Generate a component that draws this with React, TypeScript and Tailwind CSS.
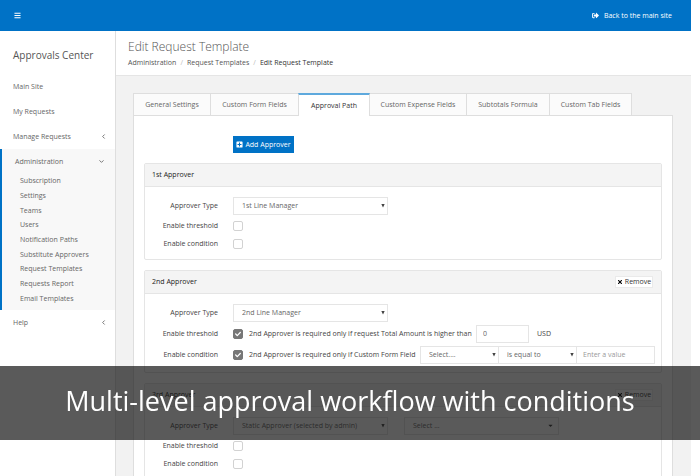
import type { ReactNode } from "react";
import { ChevronDown, ChevronLeft } from "lucide-react";
import { FaBars, FaCaretDown, FaCheck, FaPlusSquare, FaSignOutAlt, FaTimes } from "react-icons/fa";

const adminLinks = [
  "Subscription",
  "Settings",
  "Teams",
  "Users",
  "Notification Paths",
  "Substitute Approvers",
  "Request Templates",
  "Requests Report",
  "Email Templates"
];

const tabs = [
  { label: "General Settings", width: "w-[76px]" },
  { label: "Custom Form Fields", width: "w-[87px]" },
  { label: "Approval Path", width: "w-[70px]", active: true },
  { label: "Custom Expense Fields", width: "w-[96px]" },
  { label: "Subtotals Formula", width: "w-[82px]" },
  { label: "Custom Tab Fields", width: "w-[81px]" }
];

function SideLink({ label, arrow }: { label: string; arrow?: boolean }) {
  return (
    <a href="#" className="flex h-[25px] items-center justify-between pl-[13px] pr-2">
      {label}
      {arrow ? <ChevronLeft className="size-[7px]" strokeWidth={3} /> : null}
    </a>
  );
}

function Sidebar() {
  return (
    <aside className="w-[116px] shrink-0 border-r border-[#dedede] bg-white text-[7px] text-[#666]">
      <h2 className="pb-[11px] pl-[13px] pt-4 text-[10px] leading-4 text-[#555]">Approvals Center</h2>
      <nav>
        <SideLink label="Main Site" />
        <SideLink label="My Requests" />
        <SideLink label="Manage Requests" arrow />
        <div className="border-l-2 border-[#0072c6] bg-[#f8f8f8]">
          <a href="#" className="flex h-[25px] items-center justify-between pl-[13px] pr-[10px]">
            Administration
            <ChevronDown className="size-[7px]" strokeWidth={3} />
          </a>
          <ul className="flex h-[136px] flex-col pb-1 pl-[18px]">
            {adminLinks.map((link) => (
              <li key={link} className="flex flex-1 items-center">
                <a href="#" className="leading-[10px]">{link}</a>
              </li>
            ))}
          </ul>
        </div>
        <SideLink label="Help" arrow />
      </nav>
    </aside>
  );
}

function Select({ id, label, value, className, caret }: { id: string; label?: string; value: string; className: string; caret?: boolean }) {
  return (
    <div className={`relative h-[18px] ${className}`}>
      <select id={id} aria-label={label} className="block h-full w-full appearance-none border border-[#e5e5e5] bg-white pl-2 text-[7px] font-normal text-[#666]">
        <option>{value}</option>
      </select>
      {caret ? (
        <FaCaretDown className="pointer-events-none absolute right-[5px] top-[5px] size-[7px] text-[#333]" />
      ) : (
        <svg viewBox="0 0 4 4" className="pointer-events-none absolute right-[3px] top-[7px] size-1 fill-[#444]">
          <path d="M0.3 0h3.4L2 3.6z" />
        </svg>
      )}
    </div>
  );
}

function Checkbox({ id, checked }: { id: string; checked?: boolean }) {
  return (
    <span className="relative flex size-[10px] shrink-0">
      <input
        id={id}
        type="checkbox"
        defaultChecked={checked}
        className="size-[10px] appearance-none rounded-[2px] border border-[#d2d2d2] bg-white checked:border-[#777] checked:bg-[#777]"
      />
      {checked ? <FaCheck className="pointer-events-none absolute left-[2px] top-[2px] size-[6px] text-white" /> : null}
    </span>
  );
}

function Row({ id, label, height, children }: { id: string; label: string; height: string; children: ReactNode }) {
  return (
    <div className={`flex items-center gap-[15px] ${height}`}>
      <label htmlFor={id} className="w-[73px] shrink-0 whitespace-nowrap text-right">{label}</label>
      <div className="flex min-w-0 flex-1 items-center">{children}</div>
    </div>
  );
}

function Panel({ title, removable, children }: { title: string; removable?: boolean; children: ReactNode }) {
  return (
    <section className="rounded-[2px] border border-[#e5e5e5]">
      <div className="flex h-[23px] items-center justify-between border-b border-[#e5e5e5] bg-[#f4f4f4] pl-[7px] pr-2">
        <h3 className="font-medium text-[#222]">{title}</h3>
        {removable ? (
          <button type="button" className="flex h-3 w-[38px] items-center justify-center gap-[2px] border border-[#eaeaea] bg-white text-[#333]">
            <FaTimes className="size-[6px] text-black" />
            Remove
          </button>
        ) : null}
      </div>
      <div className="flex flex-col gap-[3px] pb-2 pr-[6px] pt-[10px] font-medium text-[#444]">{children}</div>
    </section>
  );
}

export default function App() {
  return (
    <div className="min-h-screen bg-white font-['Open_Sans',sans-serif] text-[7px] leading-[10px]">
      <div className="mr-[9px] flex min-h-screen flex-col">
        <header className="flex h-[31px] shrink-0 items-center justify-between bg-[#0072c6] pl-[14px] pr-[19px] text-white">
          <button type="button" aria-label="Toggle menu">
            <FaBars className="size-[7px]" />
          </button>
          <a href="#" className="flex items-center gap-[5px] font-medium">
            <FaSignOutAlt className="size-[7px]" />
            Back to the main site
          </a>
        </header>

        <div className="flex flex-1">
          <Sidebar />
          <main className="min-w-0 flex-1 bg-[#f2f2f2]">
            <div className="h-[45px] border-b border-[#e5e5e5] bg-white pl-3 pt-2">
              <h1 className="text-[12px] font-light leading-4 text-[#555]">Edit Request Template</h1>
              <nav aria-label="Breadcrumb" className="flex gap-1 pt-[3px] text-[#555]">
                <a href="#">Administration</a>
                <span className="text-[#bbb]">/</span>
                <a href="#">Request Templates</a>
                <span className="text-[#bbb]">/</span>
                <span className="font-medium text-[#333]">Edit Request Template</span>
              </nav>
            </div>

            <div className="pl-[17px] pr-[18px] pt-[17px]">
              <div role="tablist" className="relative z-10 -mb-px flex h-[23px]">
                {tabs.map((tab) => (
                  <button
                    key={tab.label}
                    type="button"
                    role="tab"
                    aria-selected={Boolean(tab.active)}
                    className={`-mr-px box-content whitespace-nowrap border-x ${tab.width} ${
                      tab.active
                        ? "relative border-t-2 border-x-[#dedede] border-t-[#5ea9dd] bg-white font-medium text-[#333]"
                        : "border-y border-[#dedede] bg-[#fbfbfb] text-[#666]"
                    }`}
                  >
                    {tab.label}
                  </button>
                ))}
              </div>

              <div className="border border-[#dedede] bg-white px-[10px] pb-3 pt-5">
                <button type="button" className="ml-[89px] flex h-[17px] w-[61px] items-center justify-center gap-[2px] bg-[#0072c6] font-medium text-white">
                  <FaPlusSquare className="size-[7px]" />
                  Add Approver
                </button>

                <div className="flex flex-col gap-[10px] pt-[10px]">
                  <Panel title="1st Approver">
                    <Row id="type-1" label="Approver Type" height="h-[18px]">
                      <Select id="type-1" value="1st Line Manager" className="w-[155px]" />
                    </Row>
                    <Row id="threshold-1" label="Enable threshold" height="h-[15px]">
                      <Checkbox id="threshold-1" />
                    </Row>
                    <Row id="condition-1" label="Enable condition" height="h-[15px]">
                      <Checkbox id="condition-1" />
                    </Row>
                  </Panel>

                  <Panel title="2nd Approver" removable>
                    <Row id="type-2" label="Approver Type" height="h-[18px]">
                      <Select id="type-2" value="2nd Line Manager" className="w-[155px]" />
                    </Row>
                    <Row id="threshold-2" label="Enable threshold" height="h-[18px]">
                      <Checkbox id="threshold-2" checked />
                      <label htmlFor="amount" className="w-[233px] whitespace-nowrap pl-[6px]">
                        2nd Approver is required only if request Total Amount is higher than
                      </label>
                      <input id="amount" defaultValue="0" className="h-[18px] w-[53px] border border-[#e5e5e5] px-[6px] pb-px font-normal text-[#666]" />
                      <span className="pl-2">USD</span>
                    </Row>
                    <Row id="condition-2" label="Enable condition" height="h-[18px]">
                      <Checkbox id="condition-2" checked />
                      <label htmlFor="field" className="whitespace-nowrap pl-[6px]">
                        2nd Approver is required only if Custom Form Field
                      </label>
                      <div className="ml-auto flex font-normal">
                        <Select id="field" value="Select...." className="w-[79px]" />
                        <Select id="operator" label="Operator" value="is equal to" className="-ml-px w-[79px]" />
                        <input aria-label="Value" placeholder="Enter a value" className="-ml-px h-[18px] w-[79px] border border-[#e5e5e5] px-[6px] pb-px placeholder:text-[#999]" />
                      </div>
                    </Row>
                  </Panel>

                  <Panel title="3rd Approver" removable>
                    <Row id="type-3" label="Approver Type" height="h-[18px]">
                      <Select id="type-3" value="Static Approver (selected by admin)" className="w-[155px]" />
                      <Select id="person" label="Approver" value="Select ..." className="ml-4 w-[155px]" caret />
                    </Row>
                    <Row id="threshold-3" label="Enable threshold" height="h-[15px]">
                      <Checkbox id="threshold-3" />
                    </Row>
                    <Row id="condition-3" label="Enable condition" height="h-[15px]">
                      <Checkbox id="condition-3" />
                    </Row>
                  </Panel>
                </div>
              </div>
            </div>
          </main>
        </div>
      </div>

      <div className="fixed inset-x-0 bottom-9 z-20 flex h-[74px] items-center justify-center bg-[#141414]/70">
        <p className="whitespace-nowrap pb-1 text-[27px] leading-9 text-white">Multi-level approval workflow with conditions</p>
      </div>
    </div>
  );
}
